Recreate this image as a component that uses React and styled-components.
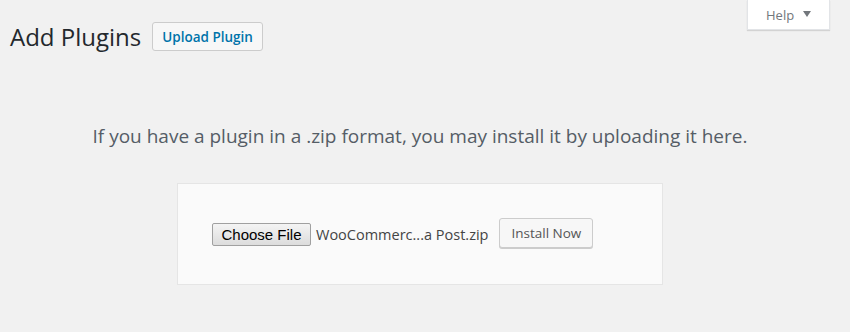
import React from 'react';
import styled, { createGlobalStyle } from 'styled-components';

const GlobalStyle = createGlobalStyle`
  html, body {
    margin: 0;
    padding: 0;
    background: #f1f1f1;
  }
  body {
    width: 850px;
    height: 332px;
    overflow: hidden;
    font-family: "Open Sans", "Noto Sans", sans-serif;
  }
`;

const Page = styled.div`
  padding: 0 20px 0 10px;
`;

const Header = styled.header`
  display: flex;
  align-items: flex-start;
`;

const TitleRow = styled.div`
  display: flex;
  align-items: center;
  gap: 11px;
  margin-top: 22px;
`;

const Title = styled.h1`
  margin: 0;
  font-size: 24px;
  font-weight: 400;
  line-height: 29px;
  color: #23282d;
`;

const Button = styled.button`
  box-sizing: border-box;
  height: ${p => p.$height || 29}px;
  padding: 0 ${p => p.$padX || 8}px;
  border: 1px solid #cccccc;
  border-radius: 3px;
  background: #f7f7f7;
  box-shadow: ${p => (p.$shadow ? '0 1px 0 #cccccc' : 'none')};
  font-family: "Open Sans", "Noto Sans", sans-serif;
  font-size: ${p => p.$size || 13}px;
  font-weight: ${p => p.$weight || 400};
  color: ${p => p.$color || '#555555'};
  white-space: nowrap;
  cursor: pointer;
`;

const HelpTab = styled.div`
  box-sizing: border-box;
  margin-left: auto;
  width: 83px;
  height: 30px;
  padding: 0 0 0 18px;
  display: flex;
  align-items: center;
  gap: 9px;
  background: #ffffff;
  border: 1px solid #e2e4e7;
  border-top: none;
  box-shadow: 0 1px 1px rgba(0, 0, 0, 0.12);
  font-size: 13px;
  color: #72777c;
`;

const Arrow = styled.span`
  width: 0;
  height: 0;
  border-left: 4px solid transparent;
  border-right: 4px solid transparent;
  border-top: 6px solid #72777c;
  margin-top: -2px;
`;

const Help = styled.p`
  margin: 72px 0 0;
  text-align: center;
  font-size: 19px;
  line-height: 26px;
  color: #555d66;
`;

const UploadBox = styled.div`
  box-sizing: border-box;
  width: 486px;
  height: 102px;
  margin: 34px auto 0;
  padding: 0 0 2px 34px;
  display: flex;
  align-items: center;
  background: #fafafa;
  border: 1px solid #e5e5e5;
`;

const ChooseFile = styled.button`
  box-sizing: border-box;
  width: 99px;
  height: 23px;
  margin-top: 2px;
  padding: 0;
  border: 1px solid #a0a0a0;
  border-radius: 2px;
  background: linear-gradient(#f4f4f4, #dcdcdc);
  font-family: "Liberation Sans", Arial, sans-serif;
  font-size: 15px;
  color: #000000;
  cursor: pointer;
`;

const FileName = styled.span`
  margin: 2px 11px 0 5px;
  font-size: 14.5px;
  color: #444444;
  white-space: nowrap;
`;

export default function App() {
  return (
    <Page>
      <GlobalStyle />
      <Header>
        <TitleRow>
          <Title>Add Plugins</Title>
          <Button $color="#0073aa" $weight={600} $size={13.5} $padX={9}>Upload Plugin</Button>
        </TitleRow>
        <HelpTab>
          Help
          <Arrow />
        </HelpTab>
      </Header>
      <Help>If you have a plugin in a .zip format, you may install it by uploading it here.</Help>
      <UploadBox>
        <ChooseFile>Choose File</ChooseFile>
        <FileName>WooCommerc...a Post.zip</FileName>
        <Button $height={30} $padX={11} $size={13.5} $shadow>Install Now</Button>
      </UploadBox>
    </Page>
  );
}
